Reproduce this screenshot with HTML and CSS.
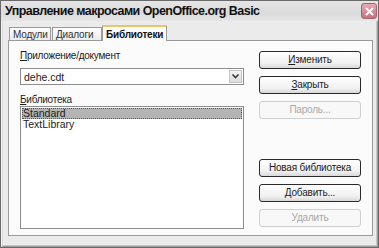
FILE: index.html
```html
<!DOCTYPE html>
<html lang="ru">
<head>
<meta charset="utf-8">
<link rel="stylesheet" href="styles.css">
</head>
<body>
<div class="window">
  <div class="titlebar">
    <span class="title">Управление макросами OpenOffice.org Basic</span>
    <span class="close"><svg width="13" height="13" viewBox="0 0 13 13"><path d="M3.5 3.5 L9.5 9.5 M9.5 3.5 L3.5 9.5" stroke="#fff" stroke-width="2" stroke-linecap="round"/></svg></span>
  </div>
  <div class="client">
    <div class="tabs">
      <div class="tab t1">Модули</div>
      <div class="tab t2">Диалоги</div>
      <div class="tab active">Библиотеки</div>
    </div>
    <div class="panel">
      <div class="left">
        <div class="label label-app"><u>П</u>риложение/документ</div>
        <div class="combo">
          <span class="combo-text">dehe.cdt</span>
          <span class="combo-btn"><svg width="9" height="7" viewBox="0 0 9 7"><path d="M1.5 1.5 L4.5 4.5 L7.5 1.5" fill="none" stroke="#3a3a3a" stroke-width="1.6"/></svg></span>
        </div>
        <div class="label label-lib"><u>Б</u>иблиотека</div>
        <div class="listbox">
          <div class="item selected">Standard</div>
          <div class="item">TextLibrary</div>
        </div>
      </div>
      <div class="right">
        <div class="btn"><u>И</u>зменить</div>
        <div class="btn"><u>З</u>акрыть</div>
        <div class="btn disabled">Пароль...</div>
        <div class="btn push">Новая библиотека</div>
        <div class="btn">Добавить...</div>
        <div class="btn disabled">Удалить</div>
      </div>
    </div>
  </div>
</div>
</body>
</html>
```
FILE: styles.css
```css
html, body {
  margin: 0;
  padding: 0;
  background: #ebebeb;
}
.window {
  width: 379px;
  height: 248px;
  box-sizing: border-box;
  border: 1px solid #6a6a6a;
  box-shadow: inset 1px 1px 0 #f4f4f4, inset -1px -1px 0 #9a9a9a, inset 2px 2px 0 #dcdcdc, inset -2px -2px 0 #c8c8c8;
  background: #ebebeb;
  font-family: "Liberation Sans", Arial, sans-serif;
  color: #1c1c1c;
  display: flex;
  flex-direction: column;
}
.titlebar {
  height: 20px;
  display: flex;
  align-items: center;
  justify-content: space-between;
  padding: 0 1px 0 4px;
  background: linear-gradient(#e6e6e6, #dadada 60%, #e6e6e6);
}
.title {
  font-weight: bold;
  font-size: 12.5px;
  letter-spacing: -0.55px;
  color: #111;
}
.close {
  width: 14px;
  height: 14px;
  border-radius: 3px;
  border: 1px solid #9a6a74;
  background: linear-gradient(#e8a9b4, #c9707f);
  display: flex;
  align-items: center;
  justify-content: center;
}
.client {
  flex: 1;
  padding: 3px 5px 0 7px;
  display: flex;
  flex-direction: column;
}
.tabs {
  display: flex;
  align-items: flex-end;
  height: 16px;
  padding-left: 1px;
  position: relative;
  z-index: 1;
}
.tab {
  font-size: 10px;
  letter-spacing: -0.2px;
  height: 12px;
  line-height: 13px;
  padding: 0 3px;
  border: 1px solid #9a9a9a;
  border-bottom: none;
  background: linear-gradient(#fdfdfd, #ececec);
  margin-right: 1px;
  color: #333;
}
.t1 { width: 34px; }
.t2 { width: 42px; }
.tab.active {
  line-height: 15px;
  font-weight: bold;
  width: 58px;
  padding: 0 2px 0 3px;
  background: #fbfbfb;
  border-top: 2px solid #eac56a;
  margin-bottom: -1px;
  margin-left: -1px;
  height: 14px;
  color: #111;
}
.panel {
  height: 196px;
  box-sizing: border-box;
  width: 365px;
  border: 1px solid #9a9a9a;
  background: #fbfbfb;
  display: flex;
  padding: 8px 0 0 11px;
  gap: 15px;
}
.left {
  width: 224px;
  display: flex;
  flex-direction: column;
}
.label {
  font-size: 10px;
  letter-spacing: -0.25px;
  line-height: 13px;
}
.combo {
  margin-top: 6px;
  height: 17px;
  box-sizing: border-box;
  border: 1px solid #8d8d8d;
  background: #fff;
  display: flex;
  align-items: center;
  justify-content: space-between;
  font-size: 10.5px;
  padding-left: 3px;
}
.combo-btn {
  width: 13px;
  height: 13px;
  margin-right: 1px;
  border: 1px solid #c4c4c4;
  box-sizing: border-box;
  background: linear-gradient(#f4f4f4, #dcdcdc);
  display: flex;
  align-items: center;
  justify-content: center;
}
.label-lib {
  margin-top: 8px;
}
.listbox {
  height: 123px;
  box-sizing: border-box;
  border: 1px solid #8d8d8d;
  background: #fff;
  padding: 1px;
}
.item {
  font-size: 10.5px;
  line-height: 11px;
  height: 11px;
  padding-left: 1px;
}
.item.selected {
  background: #b4b4b4;
  outline: 1px dotted #555;
  outline-offset: -1px;
}
.right {
  width: 102px;
  display: flex;
  flex-direction: column;
  gap: 7px;
  padding-top: 2px;
  padding-bottom: 8px;
}
.btn {
  height: 18px;
  box-sizing: border-box;
  border: 1px solid #2a2a2a;
  border-radius: 3px;
  background: linear-gradient(#ffffff, #f1f1f1 70%, #d8d8d8);
  font-size: 10px;
  letter-spacing: -0.2px;
  line-height: 16px;
  text-align: center;
}
.btn.disabled {
  border-color: #cfcfcf;
  color: #a8a8a8;
  background: #f8f8f8;
}
.btn.push {
  margin-top: auto;
}
```
